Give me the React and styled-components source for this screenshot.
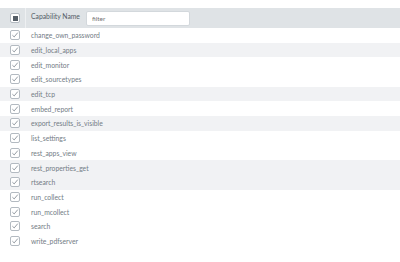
import React from "react";
import styled, { createGlobalStyle } from "styled-components";

const GlobalStyle = createGlobalStyle`
  html, body {
    margin: 0;
    padding: 0;
    background: #ffffff;
  }
  body {
    font-family: Lato, "Open Sans", "Liberation Sans", sans-serif;
  }
`;

const capabilities = [
  "change_own_password",
  "edit_local_apps",
  "edit_monitor",
  "edit_sourcetypes",
  "edit_tcp",
  "embed_report",
  "export_results_is_visible",
  "list_settings",
  "rest_apps_view",
  "rest_properties_get",
  "rtsearch",
  "run_collect",
  "run_mcollect",
  "search",
  "write_pdfserver",
];

// rows that show the grey band in the screenshot
const shaded = [1, 4, 6, 9, 10];

const Page = styled.div`
  width: 400px;
  height: 262px;
  padding-top: 8px;
  box-sizing: border-box;
  overflow: hidden;
`;

const Table = styled.div`
  display: flex;
  flex-direction: column;
`;

const HeaderRow = styled.div`
  display: flex;
  align-items: center;
  height: 20px;
  background: #dfe3e6;
`;

const Row = styled.div`
  display: flex;
  align-items: center;
  height: 14.7px;
  background: ${props => (props.shaded ? "#f1f2f4" : "#ffffff")};
`;

const CheckCell = styled.div`
  width: 26px;
  height: 100%;
  display: flex;
  align-items: center;
  padding-left: 10px;
  box-sizing: border-box;
  border-right: ${props => (props.header ? "1px solid #eef0f2" : "none")};
`;

const NameCell = styled.div`
  display: flex;
  align-items: center;
  padding-left: 5px;
  font-size: 6.8px;
  color: #737c85;
  white-space: nowrap;
`;

const HeaderLabel = styled.span`
  font-size: 6.8px;
  color: #545d66;
  margin-right: 6px;
  margin-top: -5px;
`;

const FilterInput = styled.input`
  width: 104px;
  height: 15px;
  box-sizing: border-box;
  border: 1px solid #d3d8dc;
  border-radius: 2px;
  background: #ffffff;
  padding: 0 5px;
  font-family: Lato, "Open Sans", "Liberation Sans", sans-serif;
  font-size: 6.5px;
  color: #3c444d;
  outline: none;
  ::placeholder {
    color: #a3abb2;
  }
`;

const Box = styled.div`
  width: 10px;
  height: 10px;
  box-sizing: border-box;
  border: 1px solid #b3bac1;
  border-radius: 2px;
  background: #ffffff;
  display: flex;
  align-items: center;
  justify-content: center;
`;

const Fill = styled.div`
  width: 5px;
  height: 5px;
  background: #555e67;
`;

const Check = () => (
  <Box>
    <svg width="8" height="8" viewBox="0 0 8 8">
      <path
        d="M1.4 4.2 L3.2 5.9 L6.8 1.6"
        fill="none"
        stroke="#7a838c"
        strokeWidth="0.8"
      />
    </svg>
  </Box>
);

const App = () => {
  return (
    <Page>
      <GlobalStyle />
      <Table>
        <HeaderRow>
          <CheckCell header>
            <Box>
              <Fill />
            </Box>
          </CheckCell>
          <NameCell>
            <HeaderLabel>Capability Name</HeaderLabel>
            <FilterInput placeholder="filter" />
          </NameCell>
        </HeaderRow>
        {capabilities.map((name, i) => (
          <Row key={name} shaded={shaded.includes(i)}>
            <CheckCell>
              <Check />
            </CheckCell>
            <NameCell>{name}</NameCell>
          </Row>
        ))}
      </Table>
    </Page>
  );
};

export default App;
